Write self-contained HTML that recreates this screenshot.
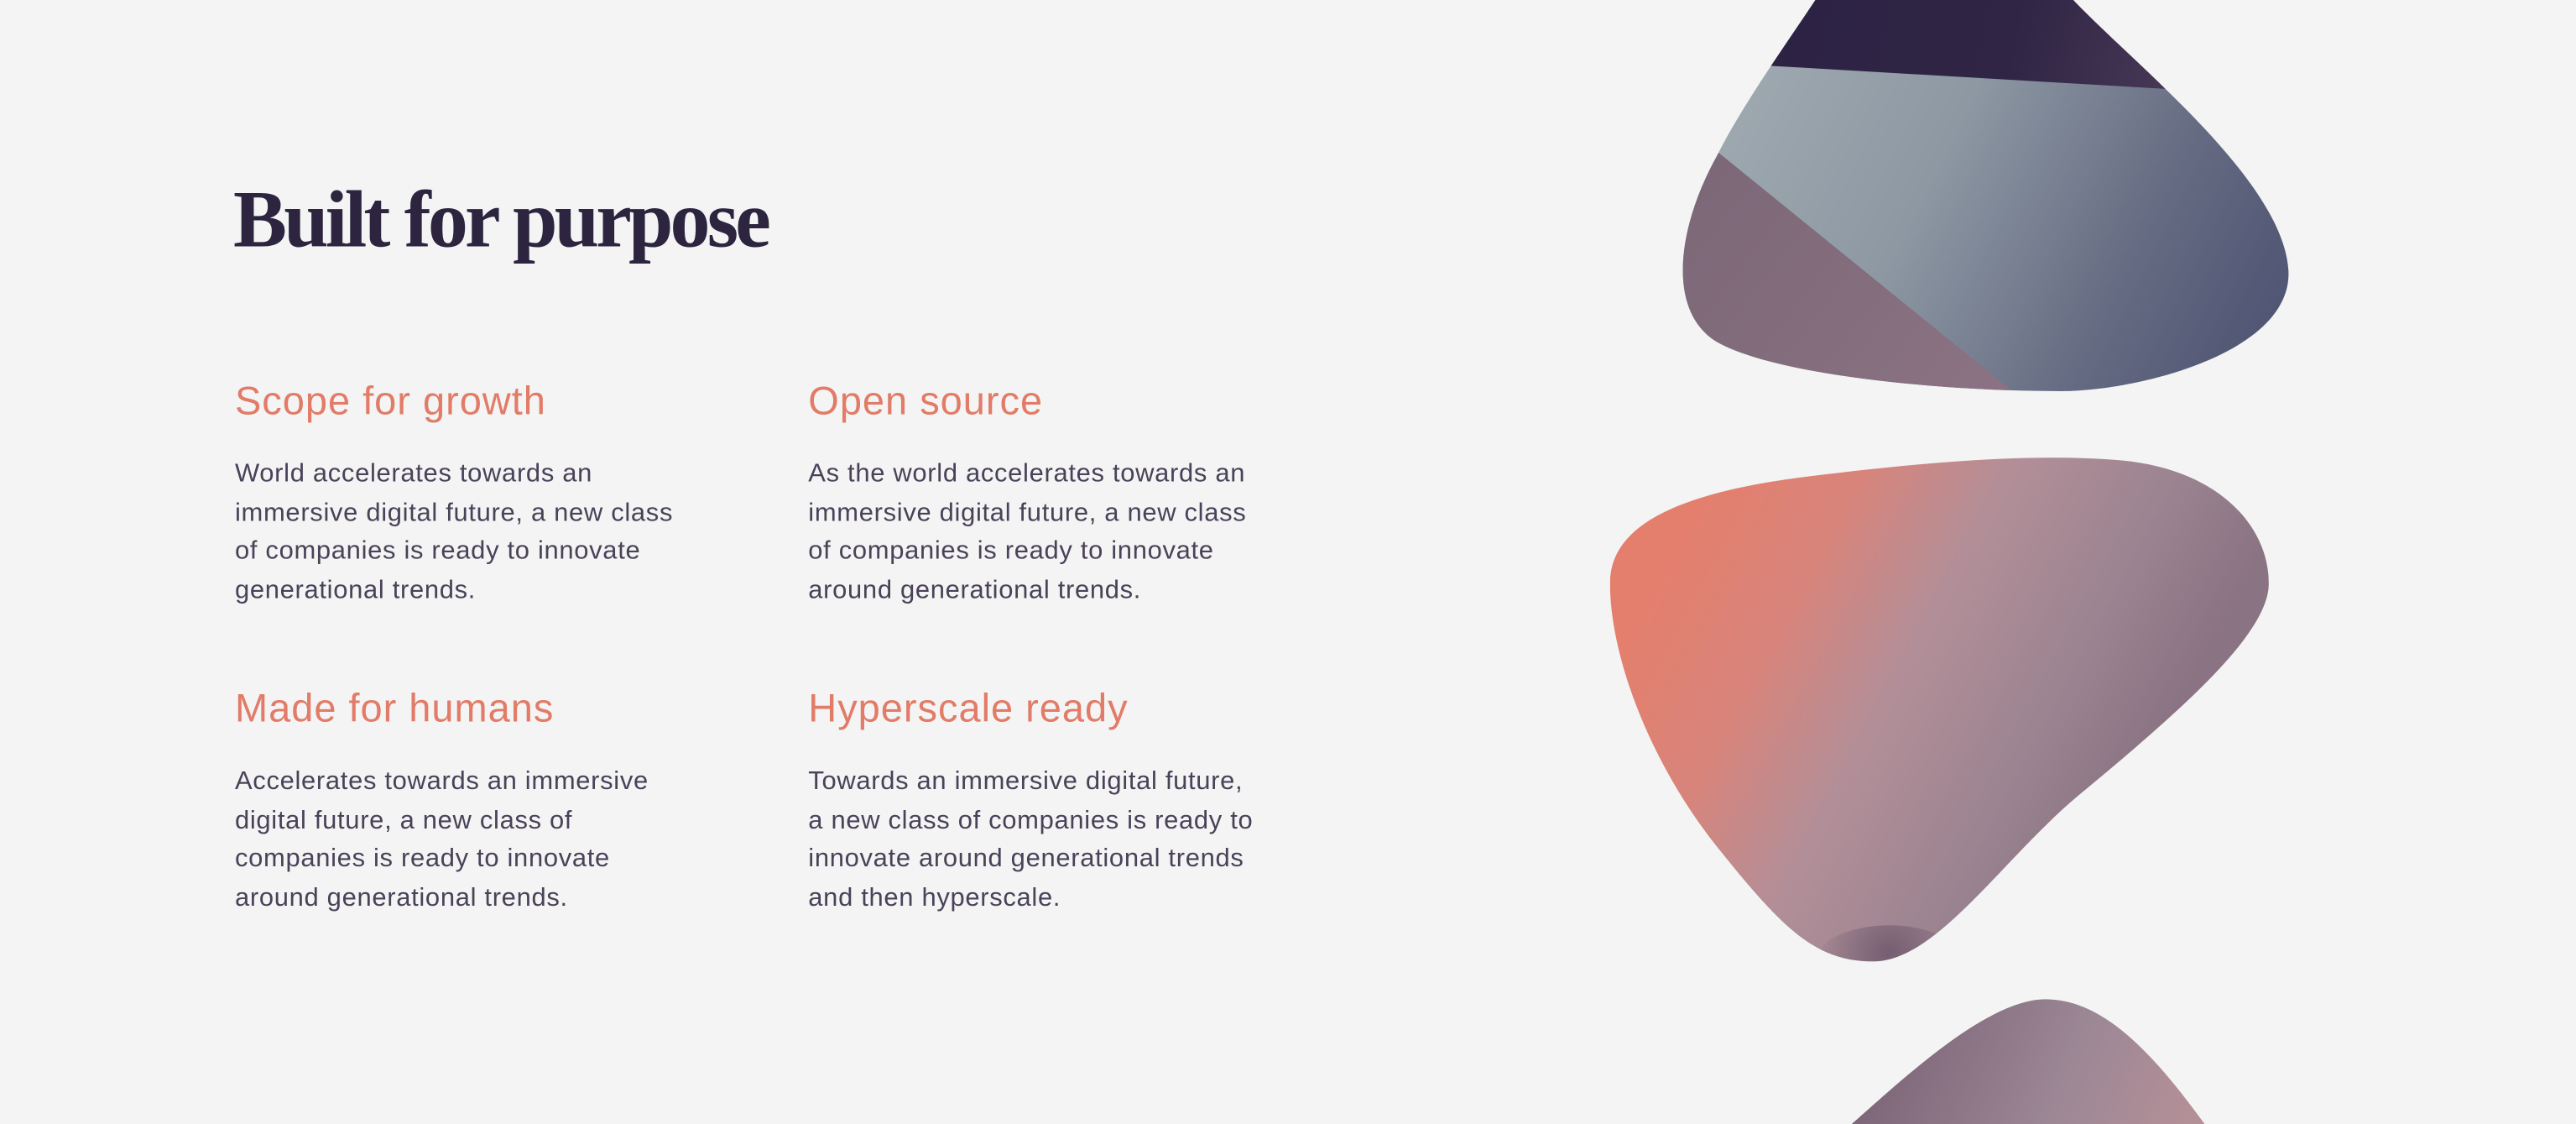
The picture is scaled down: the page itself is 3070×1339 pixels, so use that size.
<!DOCTYPE html>
<html><head><meta charset="utf-8"><style>
html,body{margin:0;padding:0;background:#f3f4f3;}
body{width:3070px;height:1338px;overflow:hidden;position:relative;}
#w{position:absolute;left:0;top:0;width:1568px;height:683.4px;transform:scale(1.95791);transform-origin:0 0;}
h1{position:absolute;left:142px;top:104px;margin:0;font-family:"Liberation Serif",serif;font-weight:bold;font-size:49px;line-height:60px;color:#2d2540;letter-spacing:-1.95px;white-space:nowrap;}
.h{position:absolute;margin:0;font-family:"Liberation Sans",sans-serif;font-size:24px;line-height:28px;color:#e27b67;letter-spacing:0.5px;white-space:nowrap;}
.p{position:absolute;margin:0;font-family:"Liberation Sans",sans-serif;font-size:15.8px;line-height:23.5px;color:#4a4259;letter-spacing:0.35px;white-space:nowrap;}
svg{position:absolute;left:0;top:0;}
</style></head><body><div id="w">
<h1>Built for purpose</h1>
<div class="h" style="left:143px;top:231px">Scope for growth</div>
<div class="p" style="left:143px;top:277px">World accelerates towards an<br>immersive digital future, a new class<br>of companies is ready to innovate<br>generational trends.</div>
<div class="h" style="left:492px;top:231px">Open source</div>
<div class="p" style="left:492px;top:277px">As the world accelerates towards an<br>immersive digital future, a new class<br>of companies is ready to innovate<br>around generational trends.</div>
<div class="h" style="left:143px;top:418px">Made for humans</div>
<div class="p" style="left:143px;top:464px">Accelerates towards an immersive<br>digital future, a new class of<br>companies is ready to innovate<br>around generational trends.</div>
<div class="h" style="left:492px;top:418px">Hyperscale ready</div>
<div class="p" style="left:492px;top:464px">Towards an immersive digital future,<br>a new class of companies is ready to<br>innovate around generational trends<br>and then hyperscale.</div>
<svg width="1568" height="684" viewBox="0 0 1568 684">
<defs>
<linearGradient id="g1" x1="1050" y1="60" x2="1390" y2="230" gradientUnits="userSpaceOnUse"><stop offset="0" stop-color="#9ea9b0"/><stop offset="0.35" stop-color="#8d98a3"/><stop offset="0.7" stop-color="#656b82"/><stop offset="1" stop-color="#4b5170"/></linearGradient>
<linearGradient id="g2" x1="1080" y1="0" x2="1320" y2="50" gradientUnits="userSpaceOnUse"><stop offset="0" stop-color="#2c2243"/><stop offset="0.6" stop-color="#302545"/><stop offset="1" stop-color="#463755"/></linearGradient>
<linearGradient id="g3" x1="1030" y1="110" x2="1200" y2="240" gradientUnits="userSpaceOnUse"><stop offset="0" stop-color="#7c6878"/><stop offset="1" stop-color="#8a7282"/></linearGradient>
<linearGradient id="g4" x1="1020" y1="330" x2="1300" y2="480" gradientUnits="userSpaceOnUse"><stop offset="0" stop-color="#e47f6d"/><stop offset="0.25" stop-color="#d8847b"/><stop offset="0.5" stop-color="#b28f98"/><stop offset="0.8" stop-color="#9a8390"/><stop offset="1" stop-color="#8a7382"/></linearGradient>
<radialGradient id="g5" cx="1150" cy="580" r="45" gradientUnits="userSpaceOnUse"><stop offset="0" stop-color="#6e576c" stop-opacity="0.85"/><stop offset="1" stop-color="#6e576c" stop-opacity="0"/></radialGradient>
<linearGradient id="g6" x1="1150" y1="610" x2="1330" y2="683" gradientUnits="userSpaceOnUse"><stop offset="0" stop-color="#7b6477"/><stop offset="0.6" stop-color="#9c8795"/><stop offset="1" stop-color="#b38f97"/></linearGradient>
<clipPath id="c1"><path d="M1105,0 L1262,0 C1300,40 1390,110 1393,165 C1395,215 1300,238 1255,238 C1180,238 1080,228 1045,208 C1015,190 1020,140 1045,95 C1060,65 1085,30 1105,0 Z"/></clipPath>
<clipPath id="c2"><path d="M980,355 C980,320 1020,300 1100,290 C1180,280 1240,276 1290,280 C1350,285 1381,320 1381,355 C1381,385 1330,430 1270,480 C1220,520 1180,585 1140,585 C1105,585 1085,565 1045,515 C1005,465 980,400 980,355 Z"/></clipPath>
</defs>
<g clip-path="url(#c1)">
<rect x="1000" y="0" width="420" height="260" fill="url(#g1)"/>
<polygon points="1000,0 1420,0 1420,56 1317,54 1077,40 1000,38" fill="url(#g2)"/>
<polygon points="1000,65 1045,92 1225,238 1000,250" fill="url(#g3)"/>
</g>
<g clip-path="url(#c2)">
<rect x="970" y="270" width="420" height="320" fill="url(#g4)"/>
<ellipse cx="1150" cy="585" rx="45" ry="22" fill="url(#g5)"/>
</g>
<path d="M1127,684 C1160,655 1210,608 1245,608 C1280,608 1310,640 1342,684 Z" fill="url(#g6)"/>
</svg>
</div></body></html>
